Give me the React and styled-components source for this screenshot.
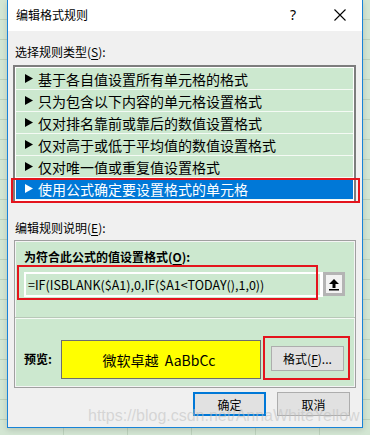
import React from "react";
import styled, { createGlobalStyle } from "styled-components";

const Global = createGlobalStyle`
  html, body { margin: 0; padding: 0; }
  body {
    width: 370px;
    height: 435px;
    overflow: hidden;
    background-color: #d3e6d3;
    background-image:
      repeating-linear-gradient(to bottom, transparent 0, transparent 19px, #bcd2bc 19px, #bcd2bc 20px),
      repeating-linear-gradient(to right, transparent 0, transparent 63px, #bcd2bc 63px, #bcd2bc 64px);
    font-family: "Noto Sans CJK SC", "Noto Sans", sans-serif;
  }
`;

const Stage = styled.div`
  position: relative;
  width: 370px;
  height: 435px;
  padding-left: 7px;
  box-sizing: border-box;
`;

const Dialog = styled.div`
  width: 356px;
  height: 428px;
  box-sizing: border-box;
  border: 1px solid #1883d7;
  border-top: none;
  background: #f0f0f0;
  display: flex;
  flex-direction: column;
  box-shadow: 0 2px 6px rgba(0, 0, 0, 0.15);
`;

const TitleBar = styled.div`
  height: 31px;
  background: #fff;
  display: flex;
  align-items: center;
  padding-left: 8px;
  font-size: 12px;
  color: #000;
  flex-shrink: 0;
`;

const TitleText = styled.div`
  flex: 1;
  line-height: 16px;
  margin-top: -1px;
`;

const HelpMark = styled.div`
  font-size: 14px;
  font-family: "Noto Sans", sans-serif;
  width: 20px;
  text-align: center;
  margin-right: 30px;
  margin-top: -2px;
`;

const CloseBox = styled.div`
  width: 14px;
  height: 14px;
  margin-right: 15px;
  margin-top: -1px;
  display: flex;
`;

const Body = styled.div`
  position: relative;
  padding: 13px 5px 0 5px;
  display: flex;
  flex-direction: column;
`;

const Label = styled.div`
  font-size: 12px;
  line-height: 16px;
  padding-left: 2px;
  color: #000;
  margin-top: ${(p) => p.$mt || 0}px;
`;

const U = styled.span`
  text-decoration: underline;
  text-underline-offset: 2px;
`;

const ListWrap = styled.div`
  position: relative;
  margin-top: 5px;
  width: 343px;
`;

const List = styled.div`
  border: 2px solid #7d7d7d;
  padding: 1px;
  background: #fff;
  display: flex;
  flex-direction: column;
`;

const Item = styled.div`
  height: 21px;
  border-bottom: 1px solid #f4faf4;
  background: ${(p) => (p.$sel ? "#0078d7" : "#cce8cf")};
  color: ${(p) => (p.$sel ? "#fff" : "#000")};
  display: flex;
  align-items: center;
  font-size: 14px;
  padding-left: 9px;
  white-space: nowrap;
`;

const ArrowIcon = styled.svg`
  width: 8px;
  height: 9px;
  margin-right: 5px;
  flex-shrink: 0;
`;

const RedBox = styled.div`
  position: absolute;
  border: 2px solid #e4141d;
  box-sizing: border-box;
  left: ${(p) => p.$l}px;
  top: ${(p) => p.$t}px;
  width: ${(p) => p.$w}px;
  height: ${(p) => p.$h}px;
  pointer-events: none;
`;

const RuleBox = styled.div`
  position: relative;
  margin: 4px 0 0 1px;
  width: 342px;
  height: 148px;
  box-sizing: border-box;
  border: 1px solid #a0a0a0;
  box-shadow: inset 0 0 0 1px #f4f4f4;
  background: #cce8cf;
  display: flex;
  flex-direction: column;
`;

const TopSection = styled.div`
  height: 77px;
  box-sizing: border-box;
  padding: 8px 0 0 9px;
  border-bottom: 1px solid #b8c8b8;
  display: flex;
  flex-direction: column;
`;

const BoldLabel = styled.div`
  font-size: 12px;
  font-weight: bold;
  line-height: 16px;
`;

const InputRow = styled.div`
  display: flex;
  margin-top: 7px;
  height: 25px;
`;

const FormulaInput = styled.div`
  width: 299px;
  height: 25px;
  box-sizing: border-box;
  border: 2px solid #fff;
  border-right-width: 3px;
  background: #cce8cf;
  font-size: 12.5px;
  line-height: 21px;
  padding-left: 2px;
  white-space: nowrap;
  color: #000;
`;

const PickButton = styled.div`
  width: 22px;
  height: 24px;
  box-sizing: border-box;
  border: 3px solid #b4b4b4;
  background: #f2f2f2;
  display: flex;
  align-items: center;
  justify-content: center;
`;

const BottomSection = styled.div`
  flex: 1;
  border-top: 1px solid #f4faf4;
  display: flex;
  align-items: flex-start;
  padding: 21px 0 0 9px;
`;

const PreviewLabel = styled.div`
  font-size: 12px;
  font-weight: bold;
  line-height: 16px;
  width: 37px;
  margin-top: 11px;
`;

const PreviewBox = styled.div`
  width: 200px;
  height: 39px;
  box-sizing: border-box;
  border: 1px solid #6e6e6e;
  background: #ffff00;
  display: flex;
  align-items: center;
  justify-content: center;
  font-size: 14px;
  padding-right: 4px;
  white-space: pre;
`;

const Btn = styled.div`
  width: ${(p) => p.$w}px;
  height: ${(p) => p.$h}px;
  box-sizing: border-box;
  background: #e1e1e1;
  border: ${(p) => (p.$primary ? "2px solid #0078d7" : "1px solid #adadad")};
  display: flex;
  align-items: center;
  justify-content: center;
  font-size: 12px;
  color: #000;
  margin-left: ${(p) => p.$ml || 0}px;
  margin-top: ${(p) => p.$mt || 0}px;
`;

const ButtonRow = styled.div`
  display: flex;
  justify-content: flex-end;
  margin-top: 4px;
  padding-right: 7px;
`;

const Watermark = styled.div`
  position: absolute;
  left: 88px;
  top: 407px;
  font-family: "Liberation Sans", Arial, sans-serif;
  font-size: 16px;
  color: rgba(190, 190, 190, 0.55);
  white-space: nowrap;
  pointer-events: none;
`;

const items = [
  "基于各自值设置所有单元格的格式",
  "只为包含以下内容的单元格设置格式",
  "仅对排名靠前或靠后的数值设置格式",
  "仅对高于或低于平均值的数值设置格式",
  "仅对唯一值或重复值设置格式",
  "使用公式确定要设置格式的单元格",
];

export default function App() {
  return (
    <>
      <Global />
      <Stage>
        <Dialog>
          <TitleBar>
            <TitleText>编辑格式规则</TitleText>
            <HelpMark>?</HelpMark>
            <CloseBox>
              <svg width="14" height="14" viewBox="0 0 14 14">
                <path d="M1.5 1.5 L12.5 12.5 M12.5 1.5 L1.5 12.5" stroke="#000" strokeWidth="1.1" fill="none" />
              </svg>
            </CloseBox>
          </TitleBar>
          <Body>
            <Label>
              选择规则类型(<U>S</U>):
            </Label>
            <ListWrap>
              <List>
                {items.map((t, i) => (
                  <Item key={t} $sel={i === 5}>
                    <ArrowIcon viewBox="0 0 8 9">
                      <path d="M0 0 L8 4.5 L0 9 Z" fill={i === 5 ? "#fff" : "#000"} />
                    </ArrowIcon>
                    {t}
                  </Item>
                ))}
              </List>
              <RedBox $l={-2} $t={113} $w={349} $h={25} />
            </ListWrap>
            <Label $mt={17}>
              编辑规则说明(<U>E</U>):
            </Label>
            <RuleBox>
              <TopSection>
                <BoldLabel>
                  为符合此公式的值设置格式(<U>O</U>):
                </BoldLabel>
                <InputRow>
                  <FormulaInput>=IF(ISBLANK($A1),0,IF($A1&lt;TODAY(),1,0))</FormulaInput>
                  <PickButton>
                    <svg width="12" height="13" viewBox="0 0 12 13">
                      <path d="M6 1 L11 6 L7.5 6 L7.5 10 L4.5 10 L4.5 6 L1 6 Z" fill="#000" />
                      <rect x="1" y="11" width="10" height="1.5" fill="#000" />
                    </svg>
                  </PickButton>
                </InputRow>
              </TopSection>
              <BottomSection>
                <PreviewLabel>预览:</PreviewLabel>
                <PreviewBox>微软卓越  AaBbCc</PreviewBox>
                <Btn $w={73} $h={25} $ml={10} $mt={6}>
                  格式(<U>F</U>)...
                </Btn>
              </BottomSection>
              <RedBox $l={2} $t={24} $w={301} $h={35} />
              <RedBox $l={248} $t={95} $w={87} $h={44} />
            </RuleBox>
            <ButtonRow>
              <Btn $w={73} $h={24} $primary>确定</Btn>
              <Btn $w={73} $h={24} $ml={11}>取消</Btn>
            </ButtonRow>
          </Body>
        </Dialog>
        <Watermark>https://blog.csdn.net/AnnaWhiteYellow</Watermark>
      </Stage>
    </>
  );
}
